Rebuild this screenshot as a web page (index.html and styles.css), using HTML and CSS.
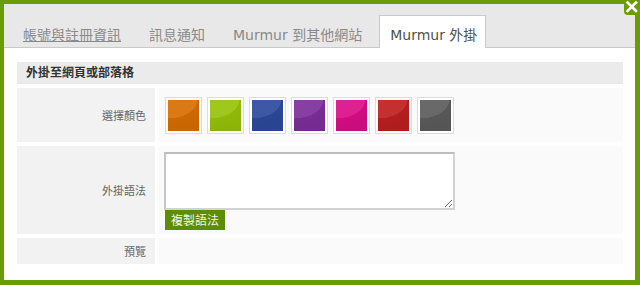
FILE: index.html
```html
<!DOCTYPE html>
<html lang="zh-Hant">
<head>
    <meta charset="UTF-8">
    <meta name="viewport" content="width=device-width, initial-scale=1.0">
    <title>Murmur 外掛</title>
    <link rel="stylesheet" href="styles.css">
</head>
<body>
    <div class="dialog">
        <a class="close" href="#" title="關閉">
            <svg width="16" height="16" viewBox="0 0 16 16">
                <path d="M3.5 2.5 L12 11 M12 2.5 L3.5 11" stroke="#fff" stroke-width="2.6" stroke-linecap="square" fill="none"/>
            </svg>
        </a>
        <div class="tabs">
            <a class="tab link" href="#">帳號與註冊資訊</a>
            <a class="tab" href="#">訊息通知</a>
            <a class="tab" href="#">Murmur 到其他網站</a>
            <a class="tab active" href="#">Murmur 外掛</a>
        </div>
        <div class="panel">
            <div class="form">
                <div class="section">外掛至網頁或部落格</div>

                <div class="label">選擇顏色</div>
                <div class="value colors">
                    <span class="swatch"><span class="chip orange"></span></span>
                    <span class="swatch"><span class="chip lime"></span></span>
                    <span class="swatch"><span class="chip blue"></span></span>
                    <span class="swatch"><span class="chip purple"></span></span>
                    <span class="swatch"><span class="chip pink"></span></span>
                    <span class="swatch"><span class="chip red"></span></span>
                    <span class="swatch"><span class="chip gray"></span></span>
                </div>

                <div class="label">外掛語法</div>
                <div class="value code">
                    <textarea id="embedCode"></textarea>
                    <button class="copy" onclick="copyCode()">複製語法</button>
                </div>

                <div class="label">預覽</div>
                <div class="value"></div>
            </div>
        </div>
    </div>

    <script>
        function copyCode() {
            const box = document.getElementById('embedCode');
            box.select();
        }
    </script>
</body>
</html>
```

FILE: styles.css
```css
* {
    box-sizing: border-box;
}
body {
    margin: 0;
    font-family: "DejaVu Sans", "Noto Sans CJK TC", sans-serif;
    background-color: #fff;
}
.dialog {
    position: relative;
    width: 640px;
    height: 285px;
    border: solid #6a9c06;
    border-width: 4px 5px 5px 4px;
    background-color: #fff;
}
.close {
    position: absolute;
    top: -4px;
    right: -5px;
    width: 16px;
    height: 15px;
    background-color: #6a9c06;
    border-bottom-left-radius: 4px;
    display: block;
}
.close svg {
    display: block;
}
.tabs {
    display: flex;
    align-items: flex-end;
    height: 44px;
    padding-left: 8px;
    background-color: #e8e8e8;
    border-bottom: 1px solid #c9c9c9;
}
.tab {
    display: flex;
    align-items: center;
    height: 33px;
    padding: 3px 10px 0;
    margin-right: 6px;
    margin-bottom: -1px;
    border: 1px solid transparent;
    border-bottom: none;
    font-size: 14px;
    color: #8a8a8a;
    text-decoration: none;
    white-space: nowrap;
}
.tab.link {
    text-decoration: underline;
}
.tab.active {
    padding-right: 8px;
    background-color: #fff;
    border-color: #c9c9c9;
    color: #50534a;
}
.panel {
    padding: 14px 12px 0 13px;
}
.form {
    display: grid;
    grid-template-columns: 138px 1fr;
    grid-template-rows: 22px 54px 88px 26px;
    gap: 4px;
}
.section {
    grid-column: 1 / 3;
    background-color: #ebebeb;
    padding-left: 9px;
    line-height: 22px;
    font-size: 12px;
    font-weight: bold;
    color: #333;
}
.label {
    display: flex;
    align-items: center;
    justify-content: flex-end;
    padding-right: 9px;
    background-color: #f2f2f2;
    font-size: 11px;
    color: #666;
}
.value {
    background-color: #fafafa;
}
.colors {
    display: flex;
    gap: 5px;
    padding: 9px 6px 0;
}
.swatch {
    width: 37px;
    height: 37px;
    padding: 2px;
    background-color: #fff;
    border: 1px solid #dcdcdc;
    cursor: pointer;
}
.chip {
    display: block;
    width: 100%;
    height: 100%;
    background-image:
        radial-gradient(ellipse 150% 95% at 0% 0%, rgba(255, 255, 255, 0.08) 0 62%, rgba(0, 0, 0, 0.05) 63%, rgba(0, 0, 0, 0.08) 100%);
}
.orange { background-color: #d86e02; }
.lime { background-color: #98c20a; }
.blue { background-color: #2c4a9c; }
.purple { background-color: #7d2f9c; }
.pink { background-color: #db0d87; }
.red { background-color: #be1f1f; }
.gray { background-color: #5c5c5c; }
.code {
    padding: 6px 5px 0;
}
.code textarea {
    display: block;
    width: 291px;
    height: 58px;
    margin: 0;
    border: 2px solid #d2d2d2;
    border-top-color: #bdbdbd;
    border-left-color: #c6c6c6;
    background-color: #fff;
    font-size: 12px;
}
.copy {
    display: block;
    width: 60px;
    height: 20px;
    margin-left: 1px;
    padding: 0;
    border: none;
    background-color: #5b8e00;
    color: #f4f4e6;
    font-family: "Noto Sans CJK TC", sans-serif;
    font-size: 12px;
    line-height: 20px;
    cursor: pointer;
}
.copy:hover {
    background-color: #4a7400;
}
```
